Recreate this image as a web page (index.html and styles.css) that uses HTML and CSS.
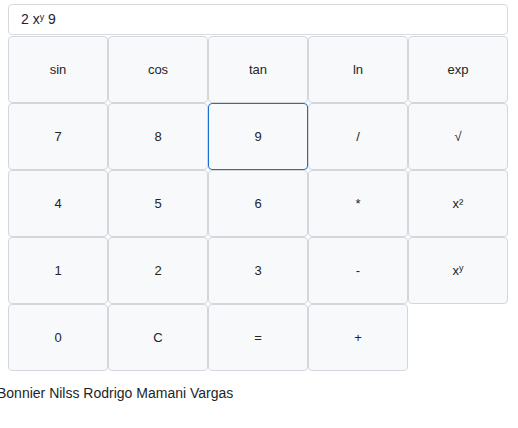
FILE: index.html
```html
<!DOCTYPE html>
<html>
<head>
<meta charset="utf-8">
<link rel="stylesheet" href="styles.css">
</head>
<body>
<div class="calc">
  <div class="display">2 x<sup>y</sup> 9</div>
  <div class="keys">
    <button class="key">sin</button>
    <button class="key">cos</button>
    <button class="key">tan</button>
    <button class="key">ln</button>
    <button class="key">exp</button>
    <button class="key">7</button>
    <button class="key">8</button>
    <button class="key focus">9</button>
    <button class="key">/</button>
    <button class="key">√</button>
    <button class="key">4</button>
    <button class="key">5</button>
    <button class="key">6</button>
    <button class="key">*</button>
    <button class="key">x²</button>
    <button class="key">1</button>
    <button class="key">2</button>
    <button class="key">3</button>
    <button class="key">-</button>
    <button class="key">x<sup>y</sup></button>
    <button class="key">0</button>
    <button class="key">C</button>
    <button class="key">=</button>
    <button class="key">+</button>
  </div>
</div>
<p class="author">Bonnier Nilss Rodrigo Mamani Vargas</p>
</body>
</html>
```
FILE: styles.css
```css
html, body {
  margin: 0;
  padding: 0;
  background: #ffffff;
  font-family: "Liberation Sans", Arial, sans-serif;
  color: #212529;
}
.calc {
  padding: 4px 10px 0 8px;
  width: 500px;
}
.display {
  box-sizing: border-box;
  height: 31px;
  border: 1px solid #d6d9dd;
  border-radius: 4px;
  padding: 0 12px;
  font-size: 14px;
  line-height: 29px;
  color: #212529;
  margin-bottom: 1px;
}
.display sup, .key sup {
  font-size: 9px;
  line-height: 0;
  vertical-align: 4px;
}
.keys {
  display: grid;
  grid-template-columns: repeat(5, 100px);
  grid-auto-rows: 67px;
}
.key {
  box-sizing: border-box;
  margin: 0;
  border: 1px solid #d3d7dd;
  border-radius: 4px;
  background: #f8f9fa;
  font-family: "Liberation Sans", Arial, sans-serif;
  font-size: 13px;
  color: #212529;
  padding: 0;
}
.key.focus {
  border-color: #1a6fd6;
}
.author {
  margin: 14px 0 0 -3px;
  font-size: 14px;
  color: #212529;
}
```
